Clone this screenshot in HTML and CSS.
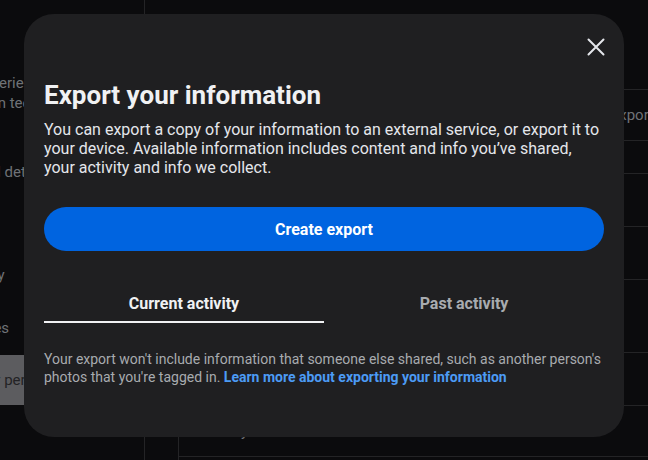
FILE: index.html
```html
<!DOCTYPE html>
<html lang="en">

<head>
    <meta charset="UTF-8">
    <meta name="viewport" content="width=device-width, initial-scale=1.0">
    <link rel="stylesheet" href="styles.css">
    <title>Export your information</title>
</head>

<body>

    <div class="page">
        <aside class="sidebar">
            <div class="side-item item-1">Your experiences</div>
            <div class="side-item item-2">Information technology</div>
            <div class="side-item item-3">Personal details</div>
            <div class="side-item item-4">Security</div>
            <div class="side-item item-5">Preferences</div>
            <div class="side-item selected">Your personal</div>
        </aside>

        <main class="main">
            <div class="list">
                <div class="row row-a"><span class="row-text">Transfer or export</span></div>
                <div class="row row-b"></div>
                <div class="row row-c"></div>
                <div class="row row-c"></div>
                <div class="row row-d"></div>
                <div class="row row-c"></div>
                <div class="row row-e"><span class="row-low">Activity</span></div>
            </div>
        </main>
    </div>

    <div class="modal">
        <div class="modal-top">
            <button class="close" aria-label="Close">
                <svg width="18" height="18" viewBox="0 0 18 18">
                    <path d="M1.5 1.5 L16.5 16.5 M16.5 1.5 L1.5 16.5" stroke="#e4e6eb" stroke-width="2" stroke-linecap="round" fill="none" />
                </svg>
            </button>
        </div>

        <h1 class="modal-title">Export your information</h1>
        <p class="modal-text">You can export a copy of your information to an external service, or export it to your device. Available information includes content and info you’ve shared, your activity and info we collect.</p>

        <button class="create-btn">Create export</button>

        <div class="tabs">
            <div class="tab active">Current activity</div>
            <div class="tab">Past activity</div>
        </div>

        <p class="note">Your export won't include information that someone else shared, such as another person's photos that you're tagged in. <a class="note-link" href="#">Learn more about exporting your information</a></p>
    </div>

</body>

</html>
```

FILE: styles.css
```css
html,
body {
    overflow: hidden;
}

body {
    margin: 0;
    padding: 0;
    background-color: #0b0b0d;
    font-family: Roboto, "Noto Sans", sans-serif;
    height: 460px;
}

.page {
    display: flex;
    height: 460px;
}

/* only the right ends of the sidebar labels show next to the modal */
.sidebar {
    width: 144px;
    flex-shrink: 0;
    border-right: 1px solid #242426;
    display: flex;
    flex-direction: column;
    padding-top: 73px;
}

.side-item {
    white-space: nowrap;
    color: #6f7276;
    font-size: 15px;
    line-height: 20px;
}

.item-1 {
    margin-left: -59px;
}

.item-2 {
    margin-left: -72px;
}

.item-3 {
    margin-top: 49px;
    margin-left: -58px;
}

.item-4 {
    margin-top: 83px;
    margin-left: -49px;
}

.item-5 {
    margin-top: 33px;
    margin-left: -71px;
}

.side-item.selected {
    margin-top: 17px;
    padding: 15px 0;
    margin-left: -30px;
    background-color: #5c5c5f;
    color: #232325;
}

.main {
    flex: 1;
    height: 460px;
    box-sizing: border-box;
    padding-left: 33px;
    padding-top: 89px;
    overflow: hidden;
}

.list {
    border-left: 1px solid #242426;
    border-top: 1px solid #242426;
    height: 371px;
    box-sizing: border-box;
}

.row {
    border-bottom: 1px solid #242426;
    box-sizing: border-box;
    color: #6f7276;
    font-size: 15px;
    display: flex;
    align-items: center;
    justify-content: flex-end;
}

.row-a {
    height: 51px;
}

.row-b {
    height: 33px;
}

.row-c {
    height: 53px;
}

.row-d {
    height: 73px;
}

.row-e {
    height: 51px;
    justify-content: flex-start;
    align-items: flex-start;
    padding-left: 20px;
    padding-top: 16px;
}

.row-text {
    white-space: nowrap;
    margin-right: -6px;
}

.modal {
    position: absolute;
    left: 24px;
    top: 14px;
    width: 600px;
    height: 423px;
    box-sizing: border-box;
    padding: 0 20px;
    background-color: #1f1f21;
    border-radius: 30px;
    color: #e4e6eb;
}

.modal-top {
    display: flex;
    justify-content: flex-end;
    padding-top: 21px;
    height: 45px;
}

.close {
    background: none;
    border: none;
    padding: 0;
    width: 24px;
    height: 24px;
    display: flex;
    align-items: center;
    justify-content: center;
    margin-right: -4px;
    cursor: pointer;
}

.modal-title {
    margin: 0;
    font-size: 26px;
    line-height: 30px;
    font-weight: 700;
    color: #f0f1f3;
}

.modal-text {
    margin: 10px 0 0 0;
    font-size: 16px;
    line-height: 19px;
    color: #e4e6eb;
}

.create-btn {
    display: block;
    width: 100%;
    height: 44px;
    margin-top: 30px;
    border: none;
    border-radius: 22px;
    background-color: #0064e0;
    color: #ffffff;
    font-family: Roboto, "Noto Sans", sans-serif;
    font-size: 16px;
    font-weight: 700;
    cursor: pointer;
}

.tabs {
    display: flex;
    margin-top: 35px;
}

.tab {
    flex: 1;
    text-align: center;
    font-size: 16px;
    font-weight: 700;
    color: #a8abaf;
    padding: 8px 0 7px 0;
    line-height: 20px;
    border-bottom: 2px solid transparent;
}

.tab.active {
    color: #f0f1f3;
    border-bottom-color: #f0f1f3;
}

.note {
    margin: 27px 0 0 0;
    font-size: 14px;
    line-height: 18px;
    color: #a8abaf;
}

.note-link {
    color: #4c9bf5;
    font-weight: 700;
    text-decoration: none;
}
```
